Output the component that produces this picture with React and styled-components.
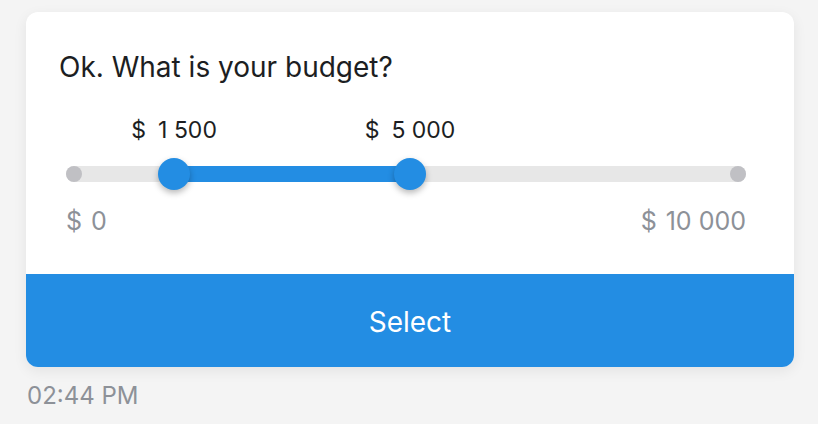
import React from "react";
import styled, { createGlobalStyle } from "styled-components";

const Global = createGlobalStyle`
  html, body { margin: 0; padding: 0; background: #f4f4f4; }
  body { font-family: Inter, "Noto Sans", sans-serif; -webkit-font-smoothing: antialiased; }
`;

const Page = styled.div`
  width: 768px;
  padding: 12px 24px 0 26px;
  display: flex;
  flex-direction: column;
  gap: 14px;
`;

const Card = styled.div`
  background: #ffffff;
  border-radius: 12px;
  overflow: hidden;
  box-shadow: 0 4px 14px rgba(0, 0, 0, 0.07);
  display: flex;
  flex-direction: column;
`;

const Body = styled.div`
  padding: 38px 48px 37px 33px;
  display: flex;
  flex-direction: column;
  gap: 32px;
`;

const Title = styled.div`
  font-size: 28px;
  line-height: 34px;
  color: #1c1e22;
`;

const Slider = styled.div`
  margin-left: 7px;
  display: flex;
  flex-direction: column;
  gap: 22px;
`;

const LabelRow = styled.div`
  position: relative;
  height: 28px;
`;

const ValueLabel = styled.div`
  position: absolute;
  top: 0;
  transform: translateX(-50%);
  font-size: 23px;
  line-height: 28px;
  color: #1c1e22;
  white-space: nowrap;
`;

const Currency = styled.span`
  margin-right: ${(p) => p.$gap}px;
`;

const Track = styled.div`
  position: relative;
  height: 16px;
  border-radius: 8px;
  background: #e7e7e7;
`;

const EndDot = styled.div`
  position: absolute;
  top: 0;
  ${(p) => (p.$side === "left" ? "left: 0;" : "right: 0;")}
  width: 16px;
  height: 16px;
  border-radius: 50%;
  background: #c0c0c4;
`;

const Fill = styled.div`
  position: absolute;
  top: 0;
  height: 16px;
  background: #238de3;
`;

const Thumb = styled.div`
  position: absolute;
  top: -8px;
  width: 32px;
  height: 32px;
  margin-left: -16px;
  border-radius: 50%;
  background: #238de3;
  box-shadow: 0 3px 6px rgba(0, 0, 0, 0.28);
`;

const Bounds = styled.div`
  margin-top: 1px;
  display: flex;
  justify-content: space-between;
  font-size: 25px;
  line-height: 32px;
  color: #8d9198;
`;

const SelectButton = styled.button`
  display: block;
  width: 100%;
  height: 93px;
  border: none;
  background: #238de3;
  color: #ffffff;
  font-family: Inter, "Noto Sans", sans-serif;
  font-size: 28px;
  padding: 2px 0 0;
  cursor: pointer;
`;

const Time = styled.div`
  margin-left: 1px;
  font-size: 24px;
  line-height: 30px;
  color: #8d9198;
`;

const group = (n) => n.toLocaleString("en-US").replace(/,/g, " ");

const Money = ({ value, gap }) => (
  <>
    <Currency $gap={gap}>$</Currency>
    {group(value)}
  </>
);

export default function App() {
  const min = 0;
  const max = 10000;
  const low = 1500;
  const high = 5000;
  // the track is 680px wide; thumb centres run from 7px to 681px
  const pos = (v) => 7 + ((v - min) / (max - min)) * 674;
  const lowX = pos(low);
  const highX = pos(high);
  return (
    <>
      <Global />
      <Page>
        <Card>
          <Body>
            <Title>Ok. What is your budget?</Title>
            <Slider>
              <LabelRow>
                <ValueLabel style={{ left: lowX }}>
                  <Money value={low} gap={12} />
                </ValueLabel>
                <ValueLabel style={{ left: highX }}>
                  <Money value={high} gap={12} />
                </ValueLabel>
              </LabelRow>
              <Track>
                <EndDot $side="left" />
                <EndDot $side="right" />
                <Fill style={{ left: lowX, width: highX - lowX }} />
                <Thumb style={{ left: lowX }} />
                <Thumb style={{ left: highX }} />
              </Track>
              <Bounds>
                <span>
                  <Money value={min} gap={9} />
                </span>
                <span>
                  <Money value={max} gap={9} />
                </span>
              </Bounds>
            </Slider>
          </Body>
          <SelectButton>Select</SelectButton>
        </Card>
        <Time>02:44 PM</Time>
      </Page>
    </>
  );
}
